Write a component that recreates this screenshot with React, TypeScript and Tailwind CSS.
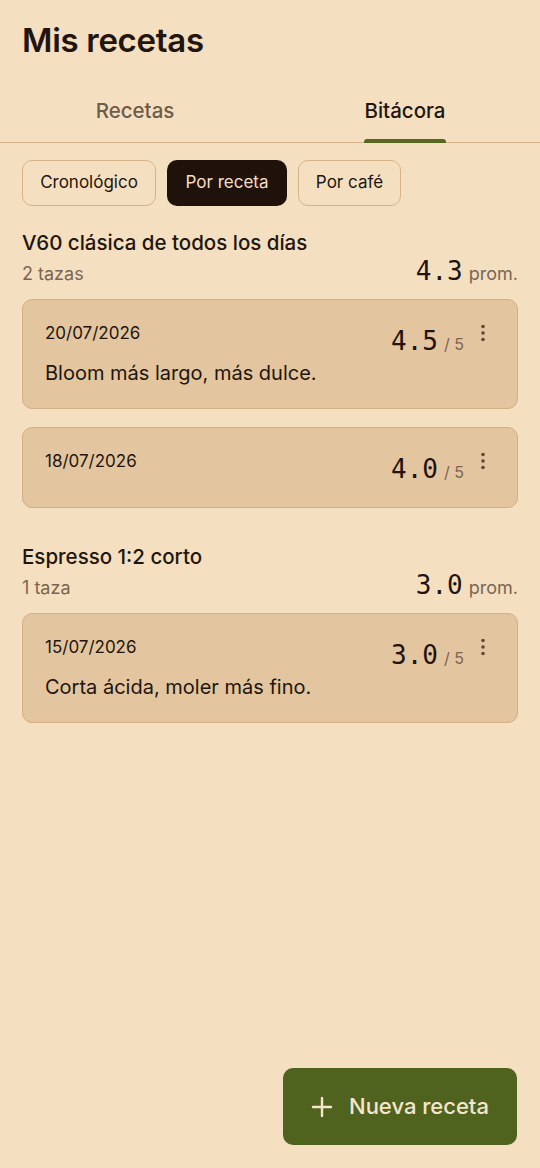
import React from "react";

type Entry = { date: string; score: string; note?: string };
type Group = { title: string; count: string; avg: string; entries: Entry[] };

const groups: Group[] = [
  {
    title: "V60 clásica de todos los días",
    count: "2 tazas",
    avg: "4.3",
    entries: [
      { date: "20/07/2026", score: "4.5", note: "Bloom más largo, más dulce." },
      { date: "18/07/2026", score: "4.0" },
    ],
  },
  {
    title: "Espresso 1:2 corto",
    count: "1 taza",
    avg: "3.0",
    entries: [{ date: "15/07/2026", score: "3.0", note: "Corta ácida, moler más fino." }],
  },
];

const mono = { fontFamily: '"DejaVu Sans Mono", "Liberation Mono", monospace' };

function Kebab() {
  return (
    <svg width="20" height="20" viewBox="0 0 20 20" className="text-[#5e4a38]">
      <circle cx="10" cy="3.5" r="1.8" fill="currentColor" />
      <circle cx="10" cy="10" r="1.8" fill="currentColor" />
      <circle cx="10" cy="16.5" r="1.8" fill="currentColor" />
    </svg>
  );
}

function EntryCard({ entry }: { entry: Entry }) {
  return (
    <div className="flex rounded-[10px] border border-[#d6ae82] bg-[#e3c5a0] pl-[22px] pr-[24px] pt-[21px] pb-[22px]">
      <div className="flex-1">
        <div className="text-[17px] leading-6 text-[#22150d]">{entry.date}</div>
        {entry.note && (
          <div className="mt-[15px] text-[20px] leading-[26px] text-[#22150d]">{entry.note}</div>
        )}
      </div>
      <div className="flex h-[36px] items-start gap-[9px]">
        <div className="mt-[5px] flex items-baseline gap-[6px]">
          <span className="text-[26px] leading-[30px] font-medium text-[#1f130b]" style={mono}>
            {entry.score}
          </span>
          <span className="text-[16px] text-[#7a6652]">/ 5</span>
        </div>
        <div className="mt-[2px]">
          <Kebab />
        </div>
      </div>
    </div>
  );
}

export default function App() {
  return (
    <div
      className="relative min-h-[1168px] w-full bg-[#f5dfc1] text-[#22150d]"
      style={{ fontFamily: 'Inter, "Noto Sans", sans-serif' }}
    >
      <div className="px-[22px] pt-5">
        <h1 className="h-10 text-[33px] leading-10 font-semibold tracking-[-0.3px]">Mis recetas</h1>
      </div>

      <div className="mt-[17px] flex h-[66px] border-b border-[#d9b28a]">
        <div className="flex flex-1 items-center justify-center pt-[3px] text-[20.5px] font-medium text-[#6e5b48]">
          Recetas
        </div>
        <div className="flex flex-1 justify-center">
          <div className="relative flex items-center pt-[3px] text-[20.5px] font-medium text-[#22150d]">
            Bitácora
            <span className="absolute left-0 right-0 bottom-[-1px] h-[4px] rounded-t-[3px] bg-[#56681f]" />
          </div>
        </div>
      </div>

      <div className="mt-[17px] flex gap-[11px] px-[22px]">
        <button className="h-[46px] w-[134px] rounded-[10px] border border-[#d9b28a] text-[17px] text-[#22150d]">
          Cronológico
        </button>
        <button className="h-[46px] w-[120px] rounded-[10px] bg-[#1e120b] text-[17px] text-[#f5dfc1]">
          Por receta
        </button>
        <button className="h-[46px] w-[103px] rounded-[10px] border border-[#d9b28a] text-[17px] text-[#22150d]">
          Por café
        </button>
      </div>

      <div className="mt-[24px] flex flex-col gap-[36px] px-[22px]">
        {groups.map((g) => (
          <div key={g.title}>
            <div className="text-[20.5px] leading-[26px] font-medium">{g.title}</div>
            <div className="flex items-baseline justify-between">
              <span className="text-[18px] text-[#7a6652]">{g.count}</span>
              <span className="flex items-baseline gap-[6px]">
                <span className="text-[26px] leading-[30px] font-medium text-[#1f130b]" style={mono}>
                  {g.avg}
                </span>
                <span className="text-[18px] text-[#7a6652]">prom.</span>
              </span>
            </div>
            <div className="mt-[12px] flex flex-col gap-[18px]">
              {g.entries.map((e) => (
                <EntryCard key={e.date} entry={e} />
              ))}
            </div>
          </div>
        ))}
      </div>

      <button className="fixed right-[23px] bottom-[23px] flex h-[77px] w-[234px] items-center gap-[16px] rounded-[10px] bg-[#4f631f] pl-[28px] text-[#f5e6cc]">
        <svg width="22" height="22" viewBox="0 0 22 22" stroke="currentColor" strokeWidth="2.4" strokeLinecap="round">
          <path d="M11 2v18M2 11h18" />
        </svg>
        <span className="text-[22px] font-medium">Nueva receta</span>
      </button>
    </div>
  );
}
